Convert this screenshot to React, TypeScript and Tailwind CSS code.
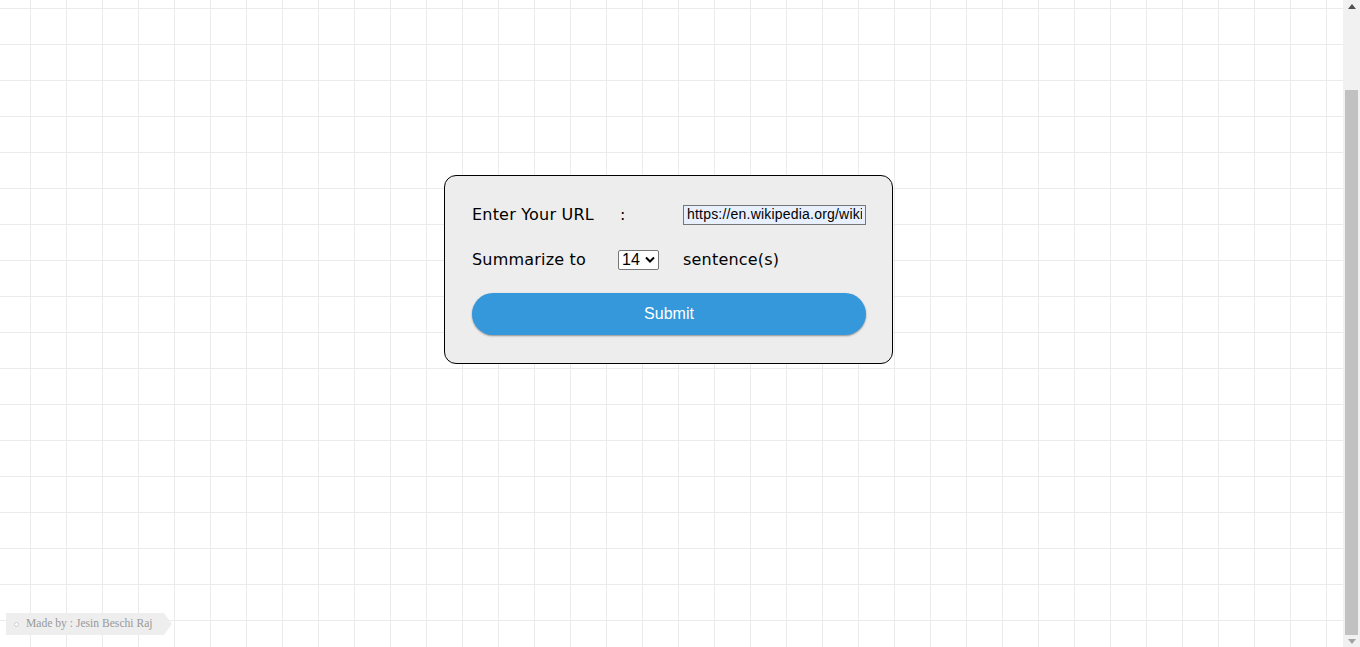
import React from "react";

export default function App() {
  return (
    <div className="flex h-[647px] w-[1360px] overflow-hidden bg-white">
      <main className="relative flex flex-1 justify-center pr-[6px] pt-[175px] bg-[linear-gradient(to_right,#ebebeb_1px,transparent_1px),linear-gradient(to_bottom,#ebebeb_1px,transparent_1px)] bg-[size:36px_36px] bg-[position:30px_8px]">
        <form
          onSubmit={(e) => e.preventDefault()}
          className="h-[189px] w-[449px] rounded-[12px] border border-black bg-[#ededed] pl-[27px] pr-[26px] pt-[28px] font-['DejaVu_Sans',Verdana,sans-serif] text-[16px] text-black"
        >
          <div className="grid grid-cols-[146px_65px_183px] grid-rows-[22px_22px] items-center gap-y-[23px]">
            <span className="tracking-[0.2px]">Enter Your URL</span>
            <span className="pl-[2px]">:</span>
            <input
              type="text"
              defaultValue="https://en.wikipedia.org/wiki/Python"
              className="-mt-[1px] h-[20px] w-[183px] border border-[#767676] bg-[#e8f0fe] px-[3px] font-['Liberation_Sans',Arial,sans-serif] text-[14px] tracking-[0.2px] text-black outline-none"
            />
            <span className="tracking-[0.2px]">Summarize to</span>
            <span className="-mt-[1px] flex h-[20px] w-[41px] items-center justify-between rounded-[2px] border border-[#767676] bg-white pl-[3px] pr-[3px] font-['Liberation_Sans',Arial,sans-serif] text-[16px] leading-none">
              14
              <svg width="10" height="7" viewBox="0 0 10 7">
                <path d="M1 1.5 L5 5.5 L9 1.5" fill="none" stroke="#000" strokeWidth="2" />
              </svg>
            </span>
            <span className="tracking-[0.2px]">sentence(s)</span>
          </div>
          <button
            type="submit"
            className="mt-[22px] h-[42px] w-[394px] rounded-full bg-[#3498db] font-['Liberation_Sans',Arial,sans-serif] text-[16px] text-white shadow-[0_1px_2px_rgba(0,0,0,0.4)]"
          >
            Submit
          </button>
        </form>

        <div className="absolute bottom-[12px] left-[6px] flex h-[22px] w-[166px] items-center gap-[7px] bg-[#eeeeee] pl-[8px] font-['Liberation_Serif','Times_New_Roman',serif] text-[11.6px] text-[#999999] [clip-path:polygon(0_0,158px_0,166px_50%,158px_100%,0_100%)]">
          <span className="h-[5px] w-[5px] rounded-full border border-[#cccccc] bg-white" />
          <span>Made by : Jesin Beschi Raj</span>
        </div>
      </main>

      <aside className="flex w-[17px] flex-col bg-[#f1f1f1]">
        <div className="flex h-[17px] items-start justify-center pt-[4px]">
          <svg width="8" height="5" viewBox="0 0 8 5">
            <path d="M0 5 L4 0 L8 5 Z" fill="#505050" />
          </svg>
        </div>
        <div className="h-[73px]" />
        <div className="mx-[2px] h-[545px] bg-[#c1c1c1]" />
        <div className="flex h-[12px] items-center justify-center">
          <svg width="8" height="5" viewBox="0 0 8 5">
            <path d="M0 0 L8 0 L4 5 Z" fill="#a3a3a3" />
          </svg>
        </div>
      </aside>
    </div>
  );
}
